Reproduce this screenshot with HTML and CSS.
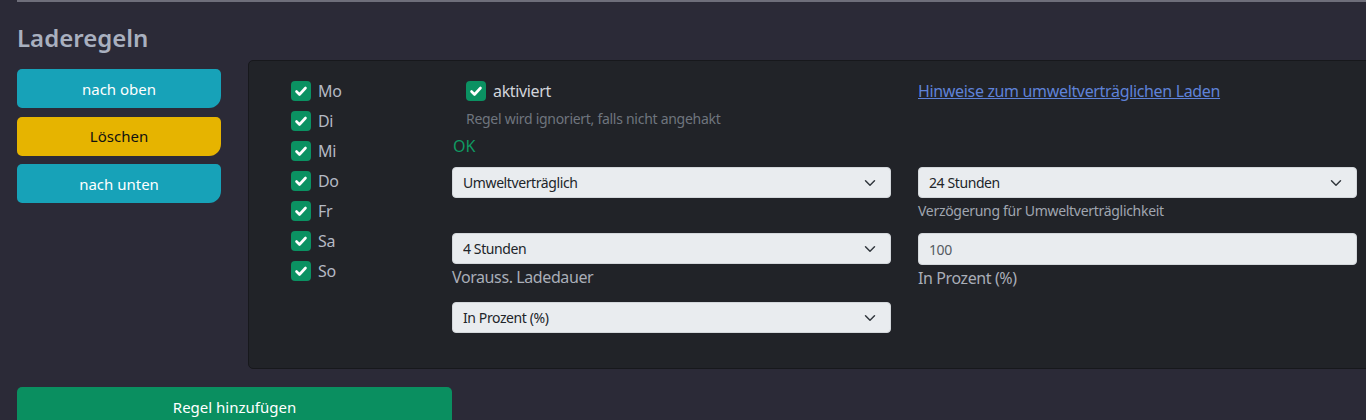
FILE: index.html
```html
<!DOCTYPE html>
<html lang="de">
<head>
<meta charset="utf-8">
<title>Laderegeln</title>
<link rel="stylesheet" href="styles.css">
</head>
<body>
<div class="page">
  <div class="rule"></div>
  <h2 class="title">Laderegeln</h2>
  <div class="row">
    <div class="actions">
      <button class="btn btn-info">nach oben</button>
      <button class="btn btn-warn">Löschen</button>
      <button class="btn btn-info">nach unten</button>
    </div>
    <div class="panel">
      <div class="days">
        <label class="check"><span class="box"><svg viewBox="0 0 20 20" width="20" height="20"><path d="M5.5 10.5l3 3 6-6.5" fill="none" stroke="#fff" stroke-width="2.6" stroke-linecap="round" stroke-linejoin="round"/></svg></span>Mo</label>
        <label class="check"><span class="box"><svg viewBox="0 0 20 20" width="20" height="20"><path d="M5.5 10.5l3 3 6-6.5" fill="none" stroke="#fff" stroke-width="2.6" stroke-linecap="round" stroke-linejoin="round"/></svg></span>Di</label>
        <label class="check"><span class="box"><svg viewBox="0 0 20 20" width="20" height="20"><path d="M5.5 10.5l3 3 6-6.5" fill="none" stroke="#fff" stroke-width="2.6" stroke-linecap="round" stroke-linejoin="round"/></svg></span>Mi</label>
        <label class="check"><span class="box"><svg viewBox="0 0 20 20" width="20" height="20"><path d="M5.5 10.5l3 3 6-6.5" fill="none" stroke="#fff" stroke-width="2.6" stroke-linecap="round" stroke-linejoin="round"/></svg></span>Do</label>
        <label class="check"><span class="box"><svg viewBox="0 0 20 20" width="20" height="20"><path d="M5.5 10.5l3 3 6-6.5" fill="none" stroke="#fff" stroke-width="2.6" stroke-linecap="round" stroke-linejoin="round"/></svg></span>Fr</label>
        <label class="check"><span class="box"><svg viewBox="0 0 20 20" width="20" height="20"><path d="M5.5 10.5l3 3 6-6.5" fill="none" stroke="#fff" stroke-width="2.6" stroke-linecap="round" stroke-linejoin="round"/></svg></span>Sa</label>
        <label class="check"><span class="box"><svg viewBox="0 0 20 20" width="20" height="20"><path d="M5.5 10.5l3 3 6-6.5" fill="none" stroke="#fff" stroke-width="2.6" stroke-linecap="round" stroke-linejoin="round"/></svg></span>So</label>
      </div>
      <div class="col col-mid">
        <div class="indent">
          <label class="check check-active"><span class="box"><svg viewBox="0 0 20 20" width="20" height="20"><path d="M5.5 10.5l3 3 6-6.5" fill="none" stroke="#fff" stroke-width="2.6" stroke-linecap="round" stroke-linejoin="round"/></svg></span>aktiviert</label>
          <div class="help">Regel wird ignoriert, falls nicht angehakt</div>
        </div>
        <div class="ok">OK</div>
        <select class="select sel-1"><option>Umweltverträglich</option></select>
        <select class="select sel-2"><option>4 Stunden</option></select>
        <div class="label-lg">Vorauss. Ladedauer</div>
        <select class="select sel-3"><option>In Prozent (%)</option></select>
      </div>
      <div class="col col-right">
        <a class="link" href="#">Hinweise zum umweltverträglichen Laden</a>
        <select class="select sel-r1"><option>24 Stunden</option></select>
        <div class="label-sm">Verzögerung für Umweltverträglichkeit</div>
        <input class="input" type="text" value="100">
        <div class="label-lg">In Prozent (%)</div>
      </div>
    </div>
  </div>
  <button class="btn btn-add">Regel hinzufügen</button>
</div>
</body>
</html>
```
FILE: styles.css
```css
html, body {
  margin: 0;
  padding: 0;
  overflow: hidden;
  background: #2b2a37;
}
body {
  font-family: "Noto Sans", "Open Sans", sans-serif;
  color: #b4b9c4;
}
.page {
  padding-left: 17px;
}
.rule {
  height: 2px;
  background: #6e6e7a;
}
.title {
  margin: 21px 0 8px;
  font-size: 24px;
  line-height: 29px;
  font-weight: 600;
  color: #a9b0bf;
}
.row {
  display: flex;
  align-items: flex-start;
  gap: 27px;
}
.actions {
  width: 204px;
  flex: none;
  display: flex;
  flex-direction: column;
  gap: 8.5px;
  padding-top: 9px;
}
.btn {
  font-family: inherit;
  border: 0;
  height: 39px;
  font-size: 15px;
  border-radius: 5px 5px 12px 5px;
  cursor: pointer;
  padding: 0;
}
.btn-info {
  background: #17a2b8;
  color: #fff;
}
.btn-warn {
  background: #e6b400;
  color: #111;
}
.panel {
  flex: 1;
  margin-right: -30px;
  background: #212328;
  border: 1px solid #17181c;
  border-radius: 5px;
  display: flex;
  align-items: flex-start;
  padding: 15px 0 35px 42px;
}
.days {
  width: 161px;
  flex: none;
  display: flex;
  flex-direction: column;
}
.check {
  display: flex;
  align-items: center;
  height: 30px;
  font-size: 16px;
  letter-spacing: -0.35px;
  color: #b4b9c4;
}
.box {
  width: 20px;
  height: 20px;
  border-radius: 4px;
  background: #0b9162;
  margin-right: 7px;
  display: flex;
}
.col {
  width: 439px;
  flex: none;
  display: flex;
  flex-direction: column;
}
.col-mid {
  margin-right: 27px;
}
.indent {
  padding-left: 14px;
}
.check-active {
  color: #d2d5dc;
  margin-left: 0;
}
.help {
  margin-top: 1px;
  font-size: 14px;
  line-height: 24px;
  letter-spacing: -0.28px;
  color: #6f757e;
}
.ok {
  margin-top: 3px;
  font-size: 16px;
  line-height: 24px;
  color: #0f9a62;
  padding-left: 1px;
}
.select, .input {
  font-family: inherit;
  font-size: 14px;
  letter-spacing: -0.4px;
  color: #212529;
  background-color: #e9ecef;
  border: 1px solid #d3d7db;
  border-radius: 4px;
  height: 31px;
  padding: 0 36px 0 10px;
  box-sizing: border-box;
  width: 100%;
  -webkit-appearance: none;
  appearance: none;
  outline: none;
}
.select {
  background-image: url("data:image/svg+xml,%3csvg xmlns='http://www.w3.org/2000/svg' viewBox='0 0 16 16'%3e%3cpath fill='none' stroke='%23343a40' stroke-linecap='round' stroke-linejoin='round' stroke-width='2' d='M2 5l6 6 6-6'/%3e%3c/svg%3e");
  background-repeat: no-repeat;
  background-position: right 12px center;
  background-size: 16px 12px;
}
.input {
  height: 32px;
  color: #555b62;
}
.sel-1 { margin-top: 9px; }
.sel-2 { margin-top: 35px; }
.sel-3 { margin-top: 13px; }
.label-lg {
  font-size: 16px;
  line-height: 24px;
  letter-spacing: -0.4px;
  margin-top: 1px;
  color: #a9aeb8;
}
.label-sm {
  font-size: 14px;
  line-height: 24px;
  letter-spacing: -0.3px;
  margin-top: 1px;
  color: #a0a6b0;
}
.link {
  font-size: 16px;
  line-height: 30px;
  letter-spacing: -0.34px;
  color: #5f82d8;
  text-decoration: underline;
  align-self: flex-start;
}
.sel-r1 { margin-top: 61px; }
.input { margin-top: 10px; }
.btn-add {
  margin-top: 18px;
  width: 435px;
  background: #0a8f60;
  color: #fff;
  border-radius: 5px;
  font-size: 15px;
}
```
